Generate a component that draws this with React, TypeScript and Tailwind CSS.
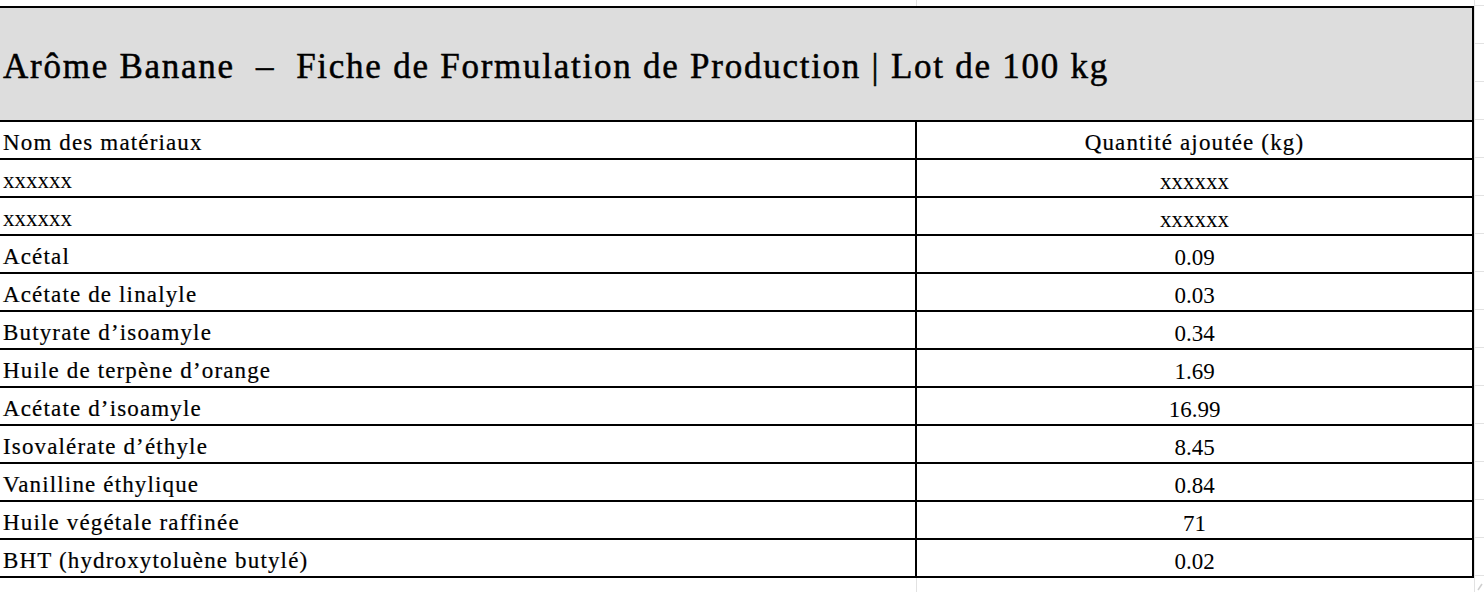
import React from "react";

const rows: [string, string][] = [
  ["xxxxxx", "xxxxxx"],
  ["xxxxxx", "xxxxxx"],
  ["Acétal", "0.09"],
  ["Acétate de linalyle", "0.03"],
  ["Butyrate d’isoamyle", "0.34"],
  ["Huile de terpène d’orange", "1.69"],
  ["Acétate d’isoamyle", "16.99"],
  ["Isovalérate d’éthyle", "8.45"],
  ["Vanilline éthylique", "0.84"],
  ["Huile végétale raffinée", "71"],
  ["BHT (hydroxytoluène butylé)", "0.02"],
];

const serif = { fontFamily: '"Liberation Serif", "Times New Roman", serif' };

function Cell({ text, left }: { text: string; left: boolean }) {
  const isX = text === "xxxxxx";
  const isNum = !left || isX;
  return (
    <div
      className={
        left
          ? "w-[917px] shrink-0 h-[36px] flex items-center pl-[3px] pt-[5px] text-black border-r-2 border-black"
          : "w-[557px] shrink-0 h-[36px] flex items-center justify-center pt-[6px] text-black border-r-2 border-black"
      }
    >
      <span
        className={
          isNum
            ? "text-[23px] leading-none"
            : "text-[23px] leading-none tracking-[0.05em] [-webkit-text-stroke:0.2px_black]"
        }
      >
        {text}
      </span>
    </div>
  );
}

export default function App() {
  return (
    <div
      className="w-[1484px] h-[592px] bg-white flex overflow-hidden relative"
      style={serif}
    >
      <div className="w-[1474px] shrink-0 flex flex-col">
        <div className="h-[6px] shrink-0 flex">
          <div className="w-[917px] border-r border-[#e2e2e2]" />
        </div>
        <div className="w-[1474px] border-t-2 border-black flex flex-col">
          <div className="h-[114px] bg-[#dddddd] border-r-2 border-b-2 border-black flex items-center pl-[3px] pt-[4px]">
            <span className="text-[35px] leading-none tracking-[0.05em] whitespace-pre text-black [-webkit-text-stroke:0.5px_black]">
              {"Arôme Banane  –  Fiche de Formulation de Production | Lot de 100 kg"}
            </span>
          </div>
          <div className="flex border-b-2 border-black">
            <div className="w-[917px] shrink-0 h-[36px] flex items-center pl-[3px] pt-[5px] border-r-2 border-black">
              <span className="text-[23px] leading-none tracking-[0.05em] [-webkit-text-stroke:0.2px_black]">
                Nom des matériaux
              </span>
            </div>
            <div className="w-[557px] shrink-0 h-[36px] flex items-center justify-center pt-[5px] border-r-2 border-black">
              <span className="text-[23px] leading-none tracking-[0.05em] [-webkit-text-stroke:0.2px_black]">
                Quantité ajoutée (kg)
              </span>
            </div>
          </div>
          {rows.map(([a, b], i) => (
            <div key={i} className="flex border-b-2 border-black">
              <Cell text={a} left />
              <Cell text={b} left={false} />
            </div>
          ))}
        </div>
        <div className="flex-1 flex">
          <div className="w-[917px] border-r border-[#e2e2e2]" />
        </div>
      </div>
      <div className="w-[10px] flex flex-col border-l border-[#e2e2e2]">
        <div className="h-[6px] shrink-0 border-b border-[#e2e2e2]" />
        {Array.from({ length: 16 }).map((_, i) => (
          <div key={i} className="h-[38px] shrink-0 border-b border-[#e2e2e2]" />
        ))}
      </div>
      <svg
        className="absolute right-[1px] bottom-[1px]"
        width="6"
        height="8"
        viewBox="0 0 6 8"
      >
        <path d="M1 7 L5 1" stroke="#cfcfcf" strokeWidth="1.5" />
      </svg>
    </div>
  );
}
